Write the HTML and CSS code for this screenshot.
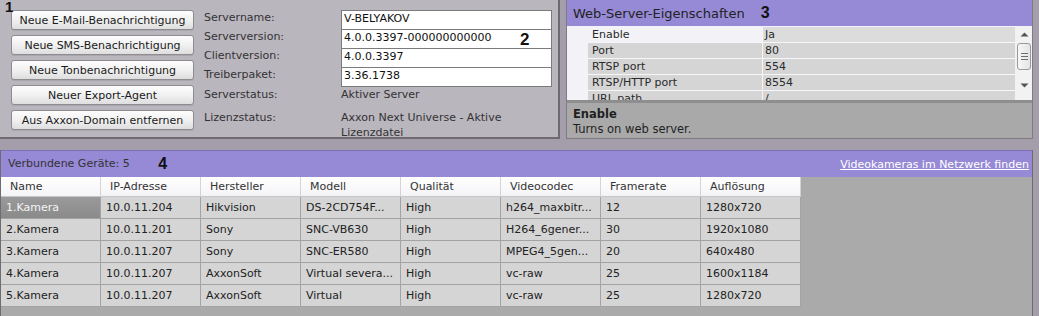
FILE: index.html
```html
<!DOCTYPE html>
<html lang="de">
<head>
<meta charset="utf-8">
<title>Server</title>
<link rel="stylesheet" href="styles.css">
</head>
<body>
<div class="screen">
  <div class="top">
    <section class="server">
      <span class="mark mark-1">1</span>
      <div class="buttons">
        <button class="btn">Neue E-Mail-Benachrichtigung</button>
        <button class="btn">Neue SMS-Benachrichtigung</button>
        <button class="btn">Neue Tonbenachrichtigung</button>
        <button class="btn">Neuer Export-Agent</button>
        <button class="btn">Aus Axxon-Domain entfernen</button>
      </div>
      <div class="info">
        <div class="lbl">Servername:</div>
        <div class="box">V-BELYAKOV</div>
        <div class="lbl">Serverversion:</div>
        <div class="box box-mark">4.0.0.3397-000000000000<span class="mark mark-2">2</span></div>
        <div class="lbl">Clientversion:</div>
        <div class="box">4.0.0.3397</div>
        <div class="lbl">Treiberpaket:</div>
        <div class="box">3.36.1738</div>
        <div class="lbl status">Serverstatus:</div>
        <div class="val status">Aktiver Server</div>
        <div class="lbl lic">Lizenzstatus:</div>
        <div class="val lic">Axxon Next Universe - Aktive<br>Lizenzdatei</div>
      </div>
    </section>
    <section class="web">
      <header class="web-head">Web-Server-Eigenschaften <span class="mark mark-3">3</span></header>
      <div class="props">
        <div class="gutter"></div>
        <div class="prop-rows">
          <div class="prop sel"><span class="pn">Enable</span><span class="pv">Ja</span></div>
          <div class="prop"><span class="pn">Port</span><span class="pv">80</span></div>
          <div class="prop"><span class="pn">RTSP port</span><span class="pv">554</span></div>
          <div class="prop"><span class="pn">RTSP/HTTP port</span><span class="pv">8554</span></div>
          <div class="prop"><span class="pn">URL path</span><span class="pv">/</span></div>
        </div>
        <div class="scroll">
          <svg class="arr" width="9" height="5" viewBox="0 0 9 5"><path d="M0.5 4.5 L4.5 0.5 L8.5 4.5 Z" fill="#555"/></svg>
          <div class="thumb"><i></i><i></i><i></i></div>
          <svg class="arr arr-down" width="9" height="5" viewBox="0 0 9 5"><path d="M0.5 0.5 L4.5 4.5 L8.5 0.5 Z" fill="#555"/></svg>
        </div>
      </div>
      <div class="desc">
        <b>Enable</b>
        <span>Turns on web server.</span>
      </div>
    </section>
  </div>
  <section class="devices">
    <header class="dev-head">
      <span>Verbundene Geräte: 5 <span class="mark mark-4">4</span></span>
      <a class="find" href="#">Videokameras im Netzwerk finden</a>
    </header>
    <div class="table">
      <div class="th">Name</div><div class="th">IP-Adresse</div><div class="th">Hersteller</div><div class="th">Modell</div><div class="th">Qualität</div><div class="th">Videocodec</div><div class="th">Framerate</div><div class="th">Auflösung</div>
      <div class="td selcell">1.Kamera</div><div class="td">10.0.11.204</div><div class="td">Hikvision</div><div class="td">DS-2CD754F...</div><div class="td">High</div><div class="td">h264_maxbitr...</div><div class="td">12</div><div class="td">1280x720</div>
      <div class="td">2.Kamera</div><div class="td">10.0.11.201</div><div class="td">Sony</div><div class="td">SNC-VB630</div><div class="td">High</div><div class="td">H264_6gener...</div><div class="td">30</div><div class="td">1920x1080</div>
      <div class="td">3.Kamera</div><div class="td">10.0.11.207</div><div class="td">Sony</div><div class="td">SNC-ER580</div><div class="td">High</div><div class="td">MPEG4_5gen...</div><div class="td">20</div><div class="td">640x480</div>
      <div class="td">4.Kamera</div><div class="td">10.0.11.207</div><div class="td">AxxonSoft</div><div class="td">Virtual severa...</div><div class="td">High</div><div class="td">vc-raw</div><div class="td">25</div><div class="td">1600x1184</div>
      <div class="td">5.Kamera</div><div class="td">10.0.11.207</div><div class="td">AxxonSoft</div><div class="td">Virtual</div><div class="td">High</div><div class="td">vc-raw</div><div class="td">25</div><div class="td">1280x720</div>
    </div>
  </section>
</div>
</body>
</html>
```
FILE: styles.css
```css
* { box-sizing: border-box; }
html, body { margin: 0; padding: 0; }
body {
  background: #a39ea9;
  font-family: "DejaVu Sans", Verdana, sans-serif;
  font-size: 11px;
  color: #2a2a2a;
  width: 1039px;
  height: 316px;
  overflow: hidden;
}
.screen { width: 1033px; }
.top { display: flex; height: 139px; }

.server {
  position: relative;
  width: 560px;
  height: 139px;
  background: #bab6be;
  border-right: 2px solid #6d6a72;
  border-bottom: 2px solid #6d6a72;
  display: flex;
  padding: 10px 0 0 11px;
}
.mark {
  font-family: "Liberation Sans", Arial, sans-serif;
  font-weight: bold;
  color: #111;
}
.mark-1 {
  position: absolute;
  left: 5px;
  top: -2px;
  font-size: 15px;
  z-index: 2;
}
.buttons { display: flex; flex-direction: column; gap: 5px; width: 183px; }
.btn {
  height: 20px;
  width: 183px;
  padding: 0;
  border: 1px solid #8e8c91;
  border-radius: 3px;
  background: linear-gradient(#fdfdfd, #f1f1f1 50%, #dedede);
  font-family: "DejaVu Sans", Verdana, sans-serif;
  font-size: 11px;
  color: #1a1a1a;
  line-height: 17px;
  text-align: center;
  box-shadow: 0 1px 0 #a9a6ad;
}
.info {
  margin-left: 10px;
  display: grid;
  grid-template-columns: 137px 211px;
  grid-template-rows: 19px 19px 19px 19px 16px auto;
  align-content: start;
}
.lbl { color: #333; line-height: 16px; }
.box {
  height: 20px;
  background: #fff;
  border: 1px solid #7b7b7b;
  padding: 0 0 0 2px;
  line-height: 15px;
  color: #111;
  position: relative;
}
.box-mark .mark-2 {
  position: absolute;
  left: 178px;
  top: 1px;
  font-size: 17px;
  line-height: 18px;
}
.val { color: #333; line-height: 15px; }
.status { margin-top: 1px; line-height: 15px; }
.lic { margin-top: 8px; line-height: 15px; }

.web {
  margin-left: 6px;
  width: 467px;
  height: 139px;
  border: 1px solid #7e7b82;
  border-top: 0;
  background: #a9a9a9;
  display: flex;
  flex-direction: column;
}
.web-head {
  height: 26px;
  background: #9689d5;
  padding-left: 6px;
  font-size: 13px;
  line-height: 26px;
  color: #222;
}
.mark-3 { font-size: 16px; margin-left: 12px; }
.props {
  display: flex;
  background: #f3f3f7;
  overflow: hidden;
  border-bottom: 3px solid #8e8e8e;
  height: 77px;
}
.gutter { width: 21px; flex: none; }
.prop-rows { width: 427px; flex: none; padding-top: 1px; }
.prop { display: flex; height: 16px; border-bottom: 1px solid #f6f6f8; line-height: 16px; }
.pn { width: 175px; padding-left: 4px; background: #d5d5d5; border-right: 1px solid #f6f6f8; }
.pv { flex: 1; padding-left: 2px; background: #d5d5d5; }
.prop.sel .pn { background: #f3f3f7; }
.prop.sel .pv { background: #dcdcdc; }
.scroll {
  width: 18px;
  flex: none;
  background: #f2f2f2;
  display: flex;
  flex-direction: column;
  align-items: center;
  padding-top: 6px;
}
.arr { display: block; }
.thumb {
  margin-top: 6px;
  width: 14px;
  height: 27px;
  border: 1px solid #9a9a9a;
  border-radius: 3px;
  background: linear-gradient(90deg, #f7f7f7, #e4e4e4);
  display: flex;
  flex-direction: column;
  justify-content: center;
  align-items: center;
  gap: 2px;
}
.thumb i { display: block; width: 7px; height: 1px; background: #6e6e6e; }
.arr-down { margin-top: 13px; }
.desc {
  flex: 1;
  display: flex;
  flex-direction: column;
  padding: 4px 0 0 6px;
  line-height: 15px;
  color: #1f1f1f;
  font-size: 11.5px;
}
.desc b { font-weight: bold; }

.devices {
  margin-top: 11px;
  height: 166px;
  background: #aaaaaa;
  border-left: 1px solid #6e6b73;
  border-right: 1px solid #6e6b73;
}
.dev-head {
  height: 27px;
  background: #9689d5;
  border-top: 1px solid #7d72b8;
  display: flex;
  justify-content: space-between;
  align-items: center;
  padding: 0 3px 0 7px;
  color: #333;
}
.mark-4 { font-size: 16px; margin-left: 25px; vertical-align: -2px; }
.find { color: #fff; text-decoration: underline; }
.table {
  display: grid;
  grid-template-columns: repeat(8, 100px);
  grid-template-rows: 20px repeat(5, 22px);
  width: 801px;
}
.th {
  background: linear-gradient(#ffffff, #f4f4f7);
  border-right: 1px solid #d3d3d6;
  border-bottom: 1px solid #c6c6c9;
  padding-left: 9px;
  line-height: 19px;
  color: #333;
}
.td {
  background: #d5d5d5;
  border-right: 1px solid #a3a3a3;
  border-bottom: 1px solid #a3a3a3;
  padding-left: 5px;
  line-height: 22px;
  color: #222;
  white-space: nowrap;
  overflow: hidden;
}
.td.selcell {
  background: linear-gradient(#9a9a9a, #8a8a8a);
  color: #f4f4f4;
}
```
